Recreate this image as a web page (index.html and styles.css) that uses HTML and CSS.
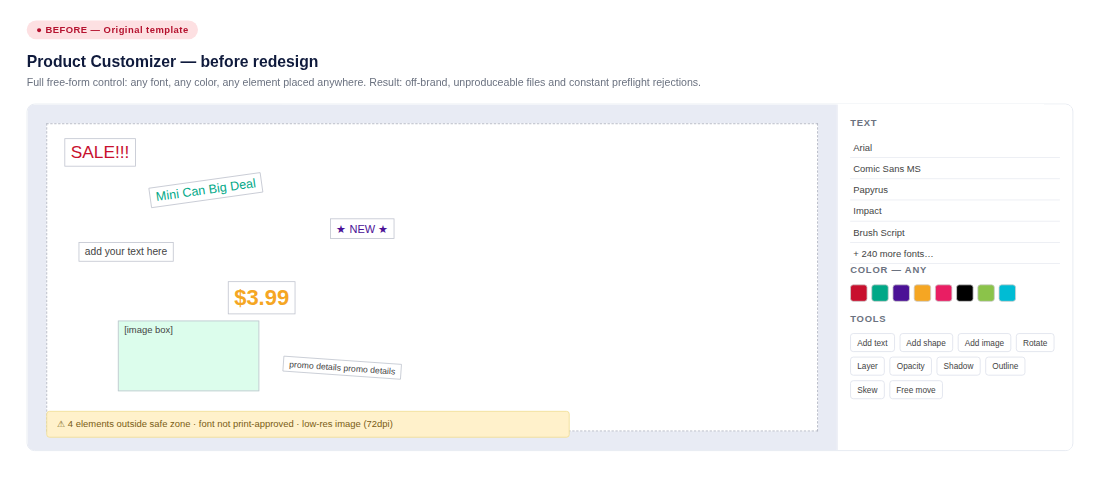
FILE: index.html
```html
<!DOCTYPE html>
<html lang="en">
<head>
<meta charset="utf-8">
<title>Product Customizer</title>
<link rel="stylesheet" href="styles.css">
</head>
<body>
<div class="frame">
<main class="page">
  <div class="badge">● BEFORE — Original template</div>
  <h1 class="title">Product Customizer — before redesign</h1>
  <p class="subtitle">Full free-form control: any font, any color, any element placed anywhere. Result: off-brand, unproduceable files and constant preflight rejections.</p>
  <div class="editor">
    <section class="stage">
      <div class="artboard">
        <div class="el el-sale">SALE!!!</div>
        <div class="el el-mini">Mini Can Big Deal</div>
        <div class="el el-new">★ NEW ★</div>
        <div class="el el-add">add your text here</div>
        <div class="el el-price">$3.99</div>
        <div class="el el-image">[image box]</div>
        <div class="el el-promo">promo details promo details</div>
      </div>
      <div class="warning">⚠ 4 elements outside safe zone · font not print-approved · low-res image (72dpi)</div>
    </section>
    <aside class="sidebar">
      <h2 class="heading">Text</h2>
      <ul class="fonts">
        <li class="font">Arial</li>
        <li class="font">Comic Sans MS</li>
        <li class="font">Papyrus</li>
        <li class="font">Impact</li>
        <li class="font">Brush Script</li>
        <li class="font">+ 240 more fonts…</li>
      </ul>
      <h2 class="heading">Color — any</h2>
      <div class="swatches">
        <span class="swatch red"></span><span class="swatch green"></span><span class="swatch purple"></span><span class="swatch orange"></span><span class="swatch pink"></span><span class="swatch black"></span><span class="swatch lime"></span><span class="swatch cyan"></span>
      </div>
      <h2 class="heading">Tools</h2>
      <div class="tools">
        <span class="tool">Add text</span><span class="tool">Add shape</span><span class="tool">Add image</span><span class="tool">Rotate</span><span class="tool">Layer</span><span class="tool">Opacity</span><span class="tool">Shadow</span><span class="tool">Outline</span><span class="tool">Skew</span><span class="tool">Free move</span>
      </div>
    </aside>
  </div>
</main>
</div>
</body>
</html>
```
FILE: styles.css
```css
* { box-sizing: border-box; }
body { margin: 0; background: #fff; font-family: "Liberation Sans", Arial, sans-serif; color: #444; }
.frame { width: 1100px; height: 477px; overflow: hidden; }
.page { transform: scale(0.785714); transform-origin: 0 0; width: 1400px; height: 607px; padding: 26px 34px 0; }
.badge { display: inline-block; height: 24px; padding: 0 12px; border-radius: 12px; background: #fde0e2; color: #b5122f; font-size: 12px; font-weight: 700; line-height: 24px; letter-spacing: 0.6px; white-space: nowrap; vertical-align: top; }
.title { margin: 16px 0 5px; font-size: 20px; line-height: 24px; color: #0f1a3c; }
.subtitle { margin: 0 0 16.5px; font-size: 13.5px; line-height: 20px; color: #6b7280; white-space: nowrap; }
.editor { display: grid; grid-template-columns: 1fr 300px; height: 442px; border: 1px solid #e1e5ef; border-radius: 10px; overflow: hidden; }
.stage { position: relative; padding: 24px; background: #e8ebf4; }
.artboard { position: relative; height: 392px; border: 1px dashed #a9aebb; background: #fff; }
.el { position: absolute; padding: 4px 7px; border: 1px solid #bfc3ce; background: #fff; font-size: 13px; line-height: normal; white-space: nowrap; }
.el-sale { left: 22px; top: 18px; font-size: 22px; color: #c8102e; }
.el-mini { left: 130px; top: 71px; padding: 3px 7px; font-size: 16px; color: #00a887; transform: rotate(-8deg); }
.el-new { left: 360px; top: 120px; font-size: 14px; color: #4b1196; }
.el-add { left: 40px; top: 150px; }
.el-price { left: 230px; top: 200px; font-size: 28px; font-weight: 700; color: #f5a623; }
.el-image { left: 90px; top: 250px; width: 180px; height: 90px; font-size: 12px; background: #dcfdec; }
.el-promo { left: 300px; top: 300px; padding: 3px 7px; font-size: 11px; transform: rotate(4deg); }
.warning { position: absolute; left: 24px; bottom: 16px; width: 666px; height: 34px; padding: 0 12px; border: 1px solid #f0dc90; border-radius: 4px; background: #fff1cb; color: #7a5c14; font-size: 12px; line-height: 32px; }
.sidebar { padding: 16px; border-left: 1px solid #e1e5ef; background: #fff; }
.heading { margin: 0 0 10px; font-size: 12px; line-height: 14px; letter-spacing: 1px; text-transform: uppercase; color: #6b7280; }
.fonts { margin: 0; padding: 1px 0 0; list-style: none; }
.font { height: 27px; padding: 1px 4px 0; border-bottom: 1px solid #e8ebf1; font-size: 12px; line-height: 27px; }
.swatches { display: flex; gap: 5px; padding-top: 2px; margin-bottom: 15px; }
.swatch { width: 22px; height: 22px; border: 1px solid #ccc; border-radius: 4px; }
.red { background: #c8102e; }
.green { background: #00a887; }
.purple { background: #4b1196; }
.orange { background: #f5a623; }
.pink { background: #e91e63; }
.black { background: #000; }
.lime { background: #8bc34a; }
.cyan { background: #00bcd4; }
.tools { display: flex; flex-wrap: wrap; gap: 6px; padding-top: 1px; margin-right: -4px; }
.tool { height: 24px; padding: 0 8px; border: 1px solid #dde1eb; border-radius: 4px; font-size: 10.5px; line-height: 22px; }
```
